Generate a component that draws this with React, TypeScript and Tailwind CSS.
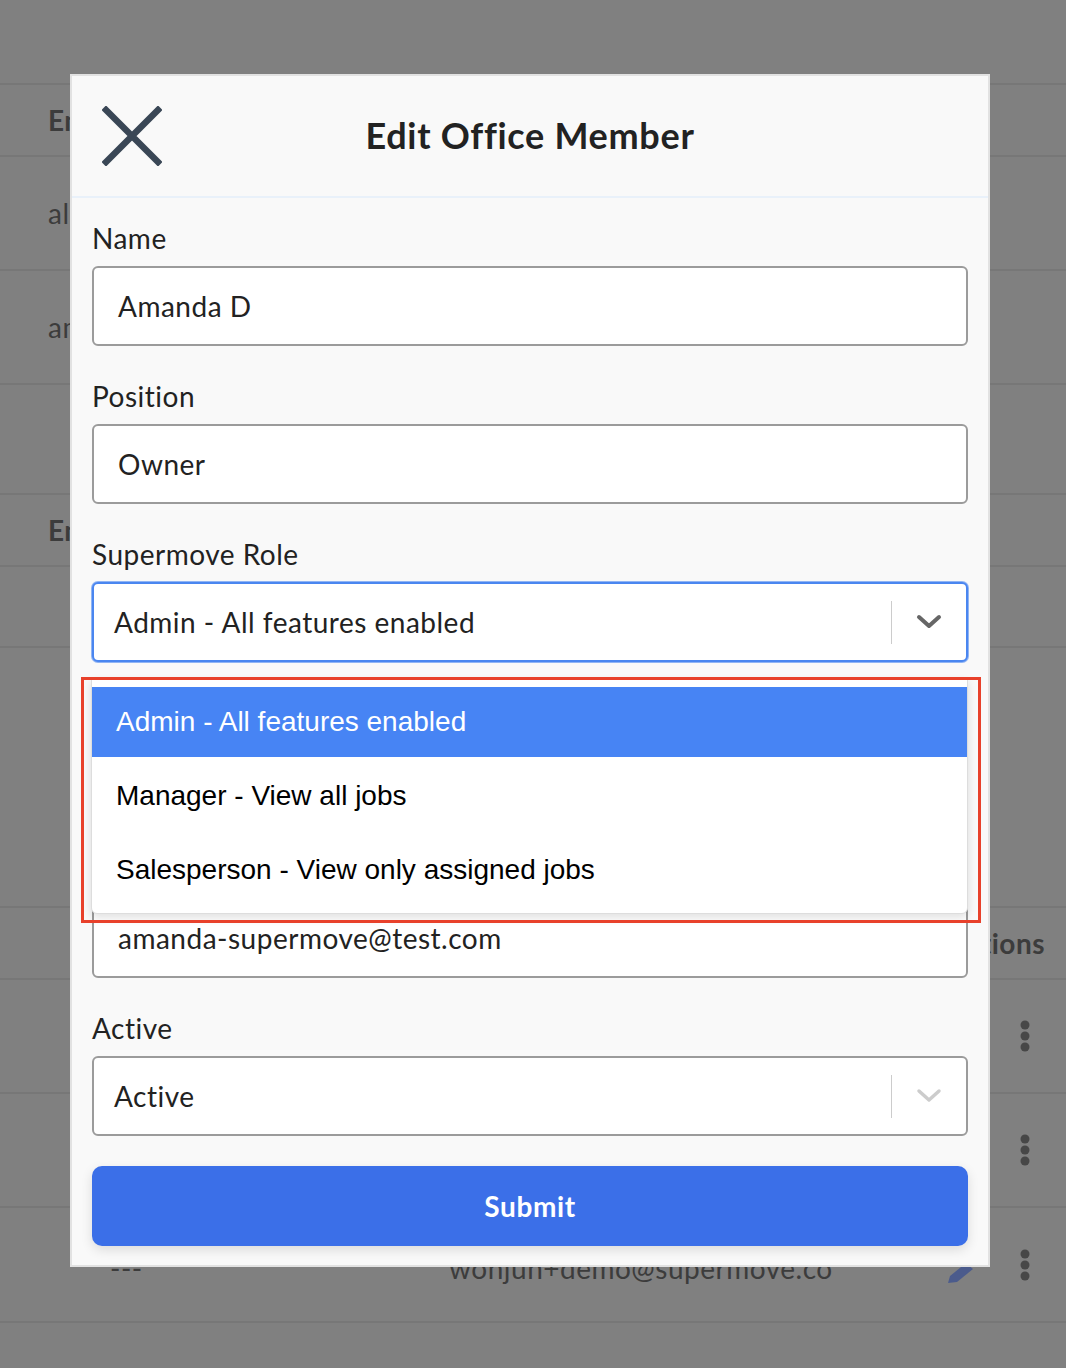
import React from 'react';

const avenir = { fontFamily: 'Lato, "Open Sans", sans-serif' };

const Dots: React.FC = () => (
    <svg width="12" height="34" viewBox="0 0 12 34" className="text-[#474747]">
        <circle cx="6" cy="6" r="4.5" fill="currentColor" />
        <circle cx="6" cy="17" r="4.5" fill="currentColor" />
        <circle cx="6" cy="28" r="4.5" fill="currentColor" />
    </svg>
);

const Chevron: React.FC<{ color: string; width?: number }> = ({ color, width = 4 }) => (
    <svg width="26" height="16" viewBox="0 0 26 16">
        <path d="M3 3 L13 12 L23 3" fill="none" stroke={color} strokeWidth={width} strokeLinecap="round" strokeLinejoin="round" />
    </svg>
);

const Field: React.FC<{ label: string; children: React.ReactNode }> = ({ label, children }) => (
    <div className="flex flex-col">
        <div className="h-[30px] leading-[30px] text-[28px] tracking-[0.5px] text-[#222] mb-[13px]">{label}</div>
        {children}
    </div>
);

const TextBox: React.FC<{ value: string }> = ({ value }) => (
    <div className="h-[80px] rounded-md border-2 border-[#9b9b9b] bg-white flex items-center pl-[24px] text-[28px] tracking-[0.5px] text-[#222]">
        {value}
    </div>
);

const ROLES = ['Admin - All features enabled', 'Manager - View all jobs', 'Salesperson - View only assigned jobs'];
const ROLE_HEIGHTS = ['h-[70px]', 'h-[78px]', 'h-[70px]'];

const Background: React.FC = () => (
    <div className="flex flex-col text-[#3c3c3c] text-[28px] tracking-[0.5px]" style={avenir}>
        <div className="h-[85px] border-b-2 border-[#777]"></div>
        <div className="h-[72px] border-b-2 border-[#777] flex items-center pl-[48px] font-bold">Email</div>
        <div className="h-[114px] border-b-2 border-[#777] flex items-center pl-[48px]">alice@supermove.co</div>
        <div className="h-[114px] border-b-2 border-[#777] flex items-center pl-[48px]">amanda-supermove@test.com</div>
        <div className="h-[110px] border-b-2 border-[#777]"></div>
        <div className="h-[72px] border-b-2 border-[#777] flex items-center pl-[48px] font-bold">Email</div>
        <div className="h-[81px] border-b-2 border-[#777]"></div>
        <div className="h-[260px] border-b-2 border-[#777]"></div>
        <div className="h-[72px] border-b-2 border-[#777] flex items-center justify-end pr-[21px] font-bold">Actions</div>
        <div className="h-[114px] border-b-2 border-[#777] flex items-center justify-end pr-[35px]"><Dots /></div>
        <div className="h-[114px] border-b-2 border-[#777] flex items-center justify-end pr-[35px]"><Dots /></div>
        <div className="h-[115px] border-b-2 border-[#777] flex items-center">
            <span className="w-[449px] pl-[110px] mt-[6px]">---</span>
            <span className="flex-1 mt-[6px]">wonjun+demo@supermove.co</span>
            <svg width="30" height="24" viewBox="0 0 30 24" className="mr-[43px] mt-[16px]">
                <path d="M2 22 L4 15 L20 2 L27 8 L11 21 Z" fill="#4b5b8c" />
            </svg>
            <span className="mr-[35px]"><Dots /></span>
        </div>
    </div>
);

export default function App() {
    return (
        <div className="relative w-[1066px] h-[1368px] overflow-hidden bg-[#808080]">
            <Background />

            <div className="absolute left-[70px] top-[74px] w-[920px] border-2 border-[#e2e2e2] bg-[#f9f9f9]" style={avenir}>
                {/* Header */}
                <div className="h-[122px] border-b-2 border-[#e9f1fa] grid grid-cols-[1fr_auto_1fr] items-center">
                    <div className="pl-[30px] flex items-center">
                        <svg width="60" height="60" viewBox="0 0 60 60">
                            <path d="M4 4 L56 56 M56 4 L4 56" stroke="#3a4756" strokeWidth="6.5" strokeLinecap="square" />
                        </svg>
                    </div>
                    <h1 className="text-[36px] leading-[40px] -mt-[3px] font-bold text-[#222] tracking-[0.7px]">Edit Office Member</h1>
                    <div></div>
                </div>

                {/* Form */}
                <div className="px-[20px] pt-[25px] pb-[19px] flex flex-col gap-[35px]">
                    <Field label="Name">
                        <TextBox value="Amanda D" />
                    </Field>
                    <Field label="Position">
                        <TextBox value="Owner" />
                    </Field>
                    <Field label="Supermove Role">
                        <div className="relative">
                            <div className="h-[80px] rounded-md border-2 border-[#4a86f0] ring-1 ring-[#4a86f0]/60 bg-white flex items-center pl-[20px] text-[28px] tracking-[0.5px] text-[#222]">
                                <span className="flex-1">Admin - All features enabled</span>
                                <span className="w-px h-[43px] bg-[#cccccc]"></span>
                                <span className="w-[74px] flex justify-center"><Chevron color="#666666" /></span>
                            </div>

                            {/* open menu */}
                            <div className="absolute left-[-1px] right-0 top-[calc(100%+16px)] z-10 bg-white border border-[#dddddd] rounded-b-md shadow-[0_4px_10px_rgba(0,0,0,0.12)] pt-[8px] pb-[8px]" style={{ fontFamily: '"Liberation Sans", Arial, sans-serif' }}>
                                {ROLES.map((role, i) => (
                                    <div key={role} className={`${ROLE_HEIGHTS[i]} flex items-center pl-[24px] text-[28px] ${i === 0 ? 'bg-[#4784f4] text-white' : 'text-black'}`}>
                                        {role}
                                    </div>
                                ))}
                            </div>

                            {/* highlight box */}
                            <div className="absolute left-[-11px] right-[-13px] top-[calc(100%+15px)] h-[246px] z-20 border-[3px] border-[#e8412b] pointer-events-none"></div>
                        </div>
                    </Field>
                    <Field label="Phone Number">
                        <TextBox value="" />
                    </Field>
                    <Field label="Email">
                        <TextBox value="amanda-supermove@test.com" />
                    </Field>
                    <Field label="Active">
                        <div className="h-[80px] rounded-md border-2 border-[#9b9b9b] bg-white flex items-center pl-[20px] text-[28px] tracking-[0.5px] text-[#222]">
                            <span className="flex-1">Active</span>
                            <span className="w-px h-[43px] bg-[#cccccc]"></span>
                            <span className="w-[74px] flex justify-center"><Chevron color="#cccccc" width={3.5} /></span>
                        </div>
                    </Field>
                    <button className="-mt-[5px] h-[80px] rounded-[10px] bg-[#3b6fe8] shadow-[0_4px_12px_rgba(0,0,0,0.12)] text-white text-[28px] tracking-[0.6px] font-bold">
                        Submit
                    </button>
                </div>
            </div>
        </div>
    );
}
